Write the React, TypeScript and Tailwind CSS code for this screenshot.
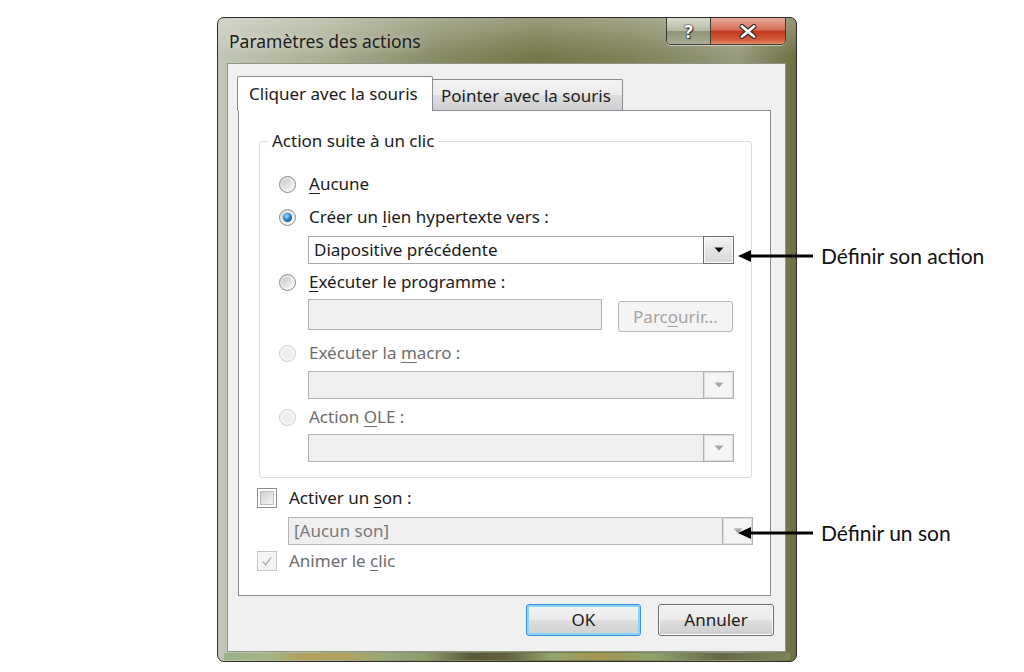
import React from "react";

function U({ children }: { children: React.ReactNode }) {
  return <span className="underline underline-offset-[3px] decoration-[1px]">{children}</span>;
}

function Radio({ checked = false, disabled = false }: { checked?: boolean; disabled?: boolean }) {
  return (
    <span
      className={`flex items-center justify-center w-[17px] h-[17px] rounded-full border shrink-0 ${
        disabled ? "border-[#cacaca] bg-[#f6f6f6]" : "border-[#8a8a8a] bg-[linear-gradient(135deg,#d9d9d9,#ffffff)]"
      }`}
    >
      <span
        className={`flex items-center justify-center w-[11px] h-[11px] rounded-full ${
          disabled ? "bg-[#eeeeee]" : "bg-[linear-gradient(135deg,#c9c9c9,#f8f8f8)]"
        }`}
      >
        {checked && (
          <span className="w-[9px] h-[9px] rounded-full bg-[radial-gradient(circle_at_40%_35%,#a9e2ff_0%,#2584cc_45%,#0a3a6c_100%)]" />
        )}
      </span>
    </span>
  );
}

function Checkbox({ checked = false, disabled = false }: { checked?: boolean; disabled?: boolean }) {
  return (
    <span
      className={`flex items-center justify-center w-[20px] h-[20px] border shrink-0 ${
        disabled ? "border-[#c4c4c4] bg-[#f7f7f7]" : "border-[#8e8f8f] bg-white"
      }`}
    >
      <span
        className={`flex items-center justify-center w-[14px] h-[14px] border ${
          disabled ? "border-[#f0f0f0] bg-[#f4f4f4]" : "border-[#bdbdbd] bg-[linear-gradient(135deg,#cfcfcf,#f7f7f7)]"
        }`}
      >
        {checked && (
          <svg width="13" height="13" viewBox="0 0 13 13">
            <path d="M2 6.5 L5 10 L11 2" stroke="#b5b5b5" strokeWidth="1.7" fill="none" />
          </svg>
        )}
      </span>
    </span>
  );
}

function Combo({
  value,
  disabled = false,
  widthClass,
}: {
  value?: string;
  disabled?: boolean;
  widthClass: string;
}) {
  return (
    <div className={`flex h-[28px] ${widthClass}`}>
      <div
        className={`flex-1 flex items-center pl-[5px] border-y border-l ${
          disabled ? "border-[#b3b3b3] bg-[#efefef] text-[#7a7a7a]" : "border-[#a9abb2] bg-white text-[#1b1b1b]"
        }`}
      >
        {value}
      </div>
      <div
        className={`w-[31px] flex items-center justify-center border ${
          disabled
            ? "border-[#b3b3b3] bg-[#f5f5f5] shadow-[inset_0_0_0_1px_#dcdcdc]"
            : "border-[#707070] bg-[linear-gradient(#f3f3f3,#d6d6d6)] shadow-[inset_0_0_0_1px_#fafafa]"
        }`}
      >
        <svg width="10" height="6" viewBox="0 0 10 6">
          <path d="M0.5 0.5 L9.5 0.5 L5 5.5 Z" fill={disabled ? "#a6a6a6" : "#111111"} />
        </svg>
      </div>
    </div>
  );
}

function Dialog() {
  return (
    <div className="w-[580px] h-[645px] rounded-[7px] border border-[#2c2d27] flex flex-col overflow-hidden bg-[linear-gradient(180deg,rgba(255,255,255,0.28)_0%,rgba(255,255,255,0)_6%),linear-gradient(90deg,#c2c6b6_0%,#acb096_18%,#878a66_38%,#74764a_55%,#7f8259_72%,#979a7e_90%,#6e6e42_100%)]">
      {/* title bar */}
      <div className="h-[45px] flex items-start shrink-0">
        <div className="pl-[11px] pt-[11px] text-[17.5px] leading-[24px] text-[#1c1c1c] [text-shadow:0_0_8px_rgba(255,255,255,0.55)]">
          Paramètres des actions
        </div>
        <div className="ml-auto mr-[10px] flex h-[27px] rounded-b-[5px] border border-t-0 border-[#3d3e33] overflow-hidden shadow-[0_1px_0_rgba(255,255,255,0.5)]">
          <div className="w-[44px] flex items-center justify-center border-r border-[#3d3e33] bg-[linear-gradient(180deg,#d9dccb_0%,#b7bba3_48%,#8f9377_52%,#a9ad93_100%)] text-white font-bold text-[17px] leading-none [text-shadow:0_0_1px_#222,0_0_2px_#222,1px_1px_1px_#333]">
            ?
          </div>
          <div className="w-[74px] flex items-center justify-center bg-[linear-gradient(180deg,#e8a898_0%,#d5705a_45%,#c2391f_52%,#d4603f_85%,#e58c6b_100%)]">
            <svg width="18" height="15" viewBox="0 0 18 15">
              <path d="M3 2.5 L15 12.5 M15 2.5 L3 12.5" stroke="#3a2a25" strokeWidth="5" strokeLinecap="round" />
              <path d="M3 2.5 L15 12.5 M15 2.5 L3 12.5" stroke="#ffffff" strokeWidth="2.8" strokeLinecap="round" />
            </svg>
          </div>
        </div>
      </div>

      {/* client area */}
      <div className="ml-[9px] w-[559px] h-[589px] shrink-0 bg-[#f0f0f0] border border-[#8d9683] flex flex-col">
        {/* tabs */}
        <div className="pl-[9px] pt-[12px] flex items-end h-[46px] relative z-10">
          <div className="w-[196px] h-[35px] -mb-[1px] bg-white border-l border-t border-r border-[#898c95] rounded-t-[2px] flex items-start pl-[11px] pt-[6px] text-[17px] leading-[22px] text-[#1b1b1b]">
            Cliquer avec la souris
          </div>
          <div className="-ml-[1px] w-[191px] h-[31px] border-l border-t border-r border-[#898c95] rounded-tr-[2px] bg-[linear-gradient(180deg,#f4f4f4_0%,#ebebeb_50%,#dddddd_52%,#cfcfcf_100%)] flex items-start pl-[8px] pt-[5px] text-[17px] leading-[22px] text-[#1b1b1b]">
            Pointer avec la souris
          </div>
        </div>

        {/* tab panel */}
        <div className="ml-[10px] w-[533px] h-[486px] bg-white border border-[#898c95] flex flex-col text-[17px] leading-[22px] text-[#1b1b1b]">
          <fieldset className="ml-[20px] mt-[19px] w-[493px] h-[348px] border border-[#d5dfe5] rounded-[3px] px-0 pt-[20px]">
            <legend className="ml-[8px] px-[4px] text-[17px] leading-[22px]">Action suite à un clic</legend>
            <div className="pl-[19px] flex flex-col">
              <div className="flex items-center h-[24px] gap-[13px]">
                <Radio />
                <span>
                  <U>A</U>ucune
                </span>
              </div>
              <div className="flex items-center h-[24px] gap-[13px] mt-[9px]">
                <Radio checked />
                <span>
                  Créer un <U>l</U>ien hypertexte vers :
                </span>
              </div>
              <div className="ml-[29px] mt-[7px]">
                <Combo value="Diapositive précédente" widthClass="w-[426px]" />
              </div>
              <div className="flex items-center h-[24px] gap-[13px] mt-[6px]">
                <Radio />
                <span>
                  <U>E</U>xécuter le programme :
                </span>
              </div>
              <div className="ml-[29px] mt-[5px] flex items-start">
                <div className="w-[294px] h-[31px] border border-[#b2b2b2] bg-[#efefef]" />
                <div className="ml-[16px] mt-[2px] w-[115px] h-[31px] rounded-[3px] border border-[#b5b8bb] bg-[#f4f4f4] flex items-center justify-center text-[#a3a3a3]">
                  Parc<U>o</U>urir...
                </div>
              </div>
              <div className="flex items-center h-[24px] gap-[13px] mt-[9px] text-[#6d6d6d]">
                <Radio disabled />
                <span>
                  Exécuter la <U>m</U>acro :
                </span>
              </div>
              <div className="ml-[29px] mt-[6px]">
                <Combo disabled widthClass="w-[426px]" />
              </div>
              <div className="flex items-center h-[24px] gap-[13px] mt-[6px] text-[#6d6d6d]">
                <Radio disabled />
                <span>
                  Action <U>O</U>LE :
                </span>
              </div>
              <div className="ml-[29px] mt-[5px]">
                <Combo disabled widthClass="w-[426px]" />
              </div>
            </div>
          </fieldset>

          <div className="ml-[18px] mt-[9px] flex items-center h-[22px] gap-[12px]">
            <Checkbox />
            <span>
              Activer un <U>s</U>on :
            </span>
          </div>
          <div className="ml-[49px] mt-[8px]">
            <Combo disabled value="[Aucun son]" widthClass="w-[465px]" />
          </div>
          <div className="ml-[18px] mt-[5px] flex items-center h-[22px] gap-[12px] text-[#6d6d6d]">
            <Checkbox checked disabled />
            <span>
              Animer le <U>c</U>lic
            </span>
          </div>
        </div>

        {/* buttons */}
        <div className="flex justify-end gap-[17px] pr-[11px] mt-[8px] text-[17px] text-[#1b1b1b]">
          <div className="w-[115px] h-[32px] rounded-[3px] border border-[#3c8fd0] shadow-[inset_0_0_0_2px_#86d6fa] bg-[linear-gradient(180deg,#f2f2f2_0%,#ebebeb_50%,#dddddd_52%,#cfcfcf_100%)] flex items-center justify-center">
            OK
          </div>
          <div className="w-[116px] h-[32px] rounded-[3px] border border-[#707070] shadow-[inset_0_0_0_1px_#fbfbfb] bg-[linear-gradient(180deg,#f2f2f2_0%,#ebebeb_50%,#dddddd_52%,#cfcfcf_100%)] flex items-center justify-center">
            Annuler
          </div>
        </div>
      </div>
      {/* bottom frame strip */}
      <div className="mt-[1px] h-[7px] mx-[6px] opacity-80 bg-[linear-gradient(90deg,#8fae7c_0%,#a2b67e_8%,#b39a4a_14%,#b5a055_22%,#94ad74_28%,#8a9d66_36%,#4e4e32_44%,#5d5c3a_50%,#9ab078_58%,#b09a4c_66%,#8fa86e_76%,#5a5a38_88%,#7e8a5c_100%)]" />
    </div>
  );
}

function Arrow() {
  return (
    <svg width="78" height="18" viewBox="0 0 78 18">
      <path d="M10 9 L76 9" stroke="#000" strokeWidth="3" />
      <path d="M1 9 L14 3 L14 15 Z" fill="#000" />
    </svg>
  );
}

export default function App() {
  return (
    <div className="relative w-[1024px] h-[672px] bg-white overflow-hidden font-['Noto_Sans','Open_Sans',sans-serif]">
      <div className="pl-[217px] pt-[17px]">
        <Dialog />
      </div>
      <div className="absolute left-[737px] top-[244px] h-[24px] flex items-center gap-[6px] font-['Lato',sans-serif] text-[21px] leading-[24px] text-[#111]">
        <Arrow />
        <span>Définir son action</span>
      </div>
      <div className="absolute left-[737px] top-[521px] h-[24px] flex items-center gap-[6px] font-['Lato',sans-serif] text-[21px] leading-[24px] text-[#111]">
        <Arrow />
        <span>Définir un son</span>
      </div>
    </div>
  );
}
